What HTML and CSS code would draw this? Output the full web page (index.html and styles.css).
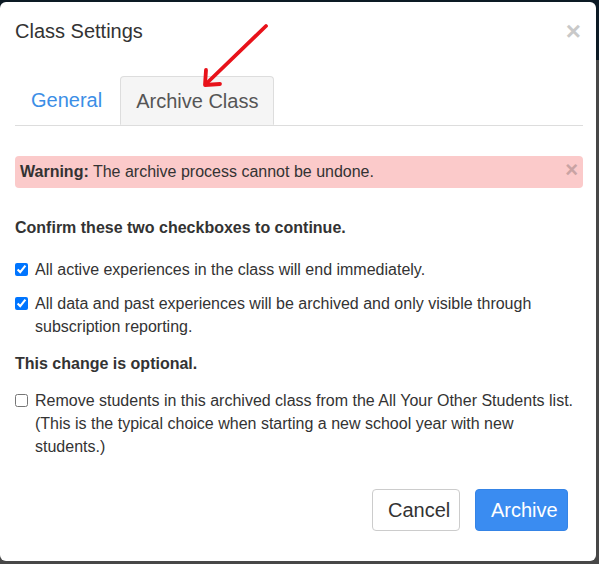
FILE: index.html
```html
<!DOCTYPE html>
<html lang="en">
<head>
<meta charset="utf-8">
<title>Class Settings</title>
<link rel="stylesheet" href="styles.css">
</head>
<body>
<div class="modal">
  <div class="modal-header">
    <h4 class="modal-title">Class Settings</h4>
    <span class="close">×</span>
  </div>
  <div class="modal-body">
    <div class="tabs">
      <span class="tab">General</span>
      <span class="tab active">Archive Class</span>
    </div>
    <div class="alert">
      <span><b>Warning:</b> The archive process cannot be undone.</span>
      <span class="alert-close">×</span>
    </div>
    <p class="heading first">Confirm these two checkboxes to continue.</p>
    <label class="check c1"><input type="checkbox" checked><span>All active experiences in the class will end immediately.</span></label>
    <label class="check c2"><input type="checkbox" checked><span>All data and past experiences will be archived and only visible through subscription reporting.</span></label>
    <p class="heading second">This change is optional.</p>
    <label class="check c3"><input type="checkbox"><span>Remove students in this archived class from the All Your Other Students list. (This is the typical choice when starting a new school year with new students.)</span></label>
  </div>
  <div class="modal-footer">
    <button class="btn btn-default">Cancel</button>
    <button class="btn btn-primary">Archive</button>
  </div>
  <svg class="arrow" width="599" height="120" viewBox="0 0 599 120">
    <line x1="266" y1="26" x2="208" y2="82" stroke="#e8121a" stroke-width="3.8" stroke-linecap="round"/>
    <polyline points="206,70 205,85 220,84" fill="none" stroke="#e8121a" stroke-width="3.8" stroke-linecap="round" stroke-linejoin="round"/>
  </svg>
</div>
</body>
</html>
```
FILE: styles.css
```css
html, body {
  margin: 0;
  padding: 0;
}
body {
  width: 599px;
  height: 564px;
  overflow: hidden;
  background: linear-gradient(to bottom, #0c1a24 0, #0c1a24 60px, #474747 60px, #474747 100%);
  font-family: "Liberation Sans", Arial, Helvetica, sans-serif;
  color: #333;
}
.modal {
  position: relative;
  margin-top: 2px;
  width: 596px;
  height: 559px;
  background: #fff;
  border-radius: 6px;
  display: flex;
  flex-direction: column;
}
.modal-header {
  display: flex;
  justify-content: space-between;
  align-items: flex-start;
  padding: 18px 15px 0 15px;
}
.modal-title {
  margin: 0;
  font-size: 20px;
  font-weight: normal;
  line-height: 22px;
  color: #333;
}
.close {
  font-size: 26px;
  font-weight: bold;
  line-height: 22px;
  color: #c9c9c9;
}
.modal-body {
  padding: 0 13px 0 15px;
}
.tabs {
  display: flex;
  margin-top: 34px;
  border-bottom: 1px solid #ddd;
  height: 49px;
}
.tab {
  font-size: 20px;
  line-height: 22px;
  padding: 13px 15px 13px 16px;
  color: #3b8ee6;
  margin-right: 3px;
}
.tab.active {
  color: #555;
  background: #f5f5f5;
  border: 1px solid #ddd;
  border-bottom: 1px solid #f5f5f5;
  border-radius: 4px 4px 0 0;
  padding: 13px 15px 13px 15px;
  margin-right: 0;
}
.alert {
  margin-top: 30px;
  background: #fbcaca;
  border-radius: 4px;
  padding: 5px 5px;
  font-size: 16px;
  line-height: 22px;
  display: flex;
  justify-content: space-between;
}
.alert b {
  font-weight: bold;
}
.alert-close {
  font-size: 22px;
  font-weight: bold;
  line-height: 18px;
  color: #c9a3a3;
}
.heading {
  font-size: 16px;
  font-weight: bold;
  line-height: 22px;
  margin: 0;
}
.heading.first {
  margin-top: 29px;
}
.heading.second {
  margin-top: 15px;
}
.check {
  display: flex;
  align-items: flex-start;
  gap: 7px;
  font-size: 16px;
  line-height: 23px;
}
.check input {
  margin: 5px 0 0 0;
  width: 13px;
  height: 13px;
  flex: none;
}
.check.c1 {
  margin-top: 19px;
}
.check.c2 {
  margin-top: 11px;
}
.check.c3 {
  margin-top: 14px;
}
.modal-footer {
  display: flex;
  justify-content: flex-end;
  gap: 15px;
  padding: 31px 28px 0 0;
}
.btn {
  font-family: "Liberation Sans", Arial, Helvetica, sans-serif;
  font-size: 20px;
  line-height: 22px;
  height: 42px;
  padding: 0 15px;
  border-radius: 4px;
  border: 1px solid #ccc;
  cursor: pointer;
}
.btn-default {
  background: #fff;
  color: #333;
  width: 88px;
}
.btn-primary {
  background: #3a8cf1;
  border-color: #3584e6;
  color: #fff;
  width: 93px;
}
.arrow {
  position: absolute;
  left: 0;
  top: -2px;
  pointer-events: none;
}
```
